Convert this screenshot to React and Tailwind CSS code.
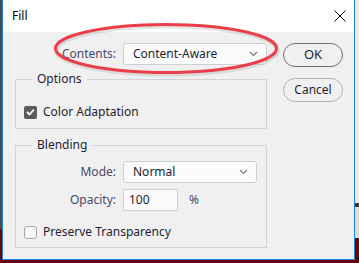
import React from "react";

const font = { fontFamily: '"Noto Sans", "Open Sans", sans-serif' };

function Select({ value, className }) {
  return (
    <div
      className={`h-[22px] flex items-center justify-between pl-[9px] pr-[8px] border border-[#cfcfcf] rounded-[3px] bg-[#fbfbfb] text-[12px] text-[#1f1f33] ${className}`}
    >
      <span>{value}</span>
      <svg width="9" height="6" viewBox="0 0 9 6">
        <path d="M1 1 L4.5 4.5 L8 1" fill="none" stroke="#7a7a7a" strokeWidth="1.1" />
      </svg>
    </div>
  );
}

function Group({ label, className, children }) {
  return (
    <div className={`relative border border-[#d3d3d3] ${className}`}>
      <span className="absolute -top-[9px] left-[16px] px-[5px] bg-[#f0f0f0] text-[12px] leading-[16px] text-[#1f1f33]">
        {label}
      </span>
      {children}
    </div>
  );
}

export default function App() {
  return (
    <div
      className="w-[359px] h-[263px] overflow-hidden flex bg-[#6b0505] relative"
      style={font}
    >
      <div className="w-[2px] h-full bg-[linear-gradient(to_bottom,#4a4a4a_0,#4a4a4a_229px,#6b0505_229px)]" />
      <div className="w-[353px] h-[260px] border-x border-b border-[#1a84d8] bg-[#f0f0f0] flex flex-col">
        <div className="h-[32px] bg-white flex items-center justify-between pl-[9px] pr-[8px]">
          <span className="text-[12px] text-black">Fill</span>
          <svg width="12" height="12" viewBox="0 0 12 12">
            <path d="M0.5 0.5 L11.5 11.5 M11.5 0.5 L0.5 11.5" stroke="#111" strokeWidth="1" />
          </svg>
        </div>
        <div className="flex pt-[11px] pl-[12px]">
          <div className="w-[252px] flex flex-col">
            <div className="flex items-center h-[22px]">
              <span className="w-[101px] text-right text-[12px] text-[#4a4a62]">Contents:</span>
              <Select value="Content-Aware" className="ml-[7px] w-[144px]" />
            </div>
            <Group label="Options" className="mt-[14px] h-[50px]">
              <div className="flex items-center pt-[23px] pl-[8px]">
                <span className="w-[13px] h-[13px] rounded-[2px] bg-[#5b5b5b] flex items-center justify-center">
                  <svg width="9" height="8" viewBox="0 0 9 8">
                    <path d="M1 4 L3.5 6.5 L8 1.5" fill="none" stroke="#fff" strokeWidth="1.8" />
                  </svg>
                </span>
                <span className="ml-[6px] text-[12px] text-[#1f1f33]">Color Adaptation</span>
              </div>
            </Group>
            <Group label="Blending" className="mt-[16px] h-[103px]">
              <div className="flex items-center h-[22px] mt-[15px]">
                <span className="w-[100px] text-right text-[12px] text-[#4a4a62]">Mode:</span>
                <Select value="Normal" className="ml-[7px] w-[134px]" />
              </div>
              <div className="flex items-center h-[22px] mt-[6px]">
                <span className="w-[100px] text-right text-[12px] text-[#4a4a62]">Opacity:</span>
                <div className="ml-[7px] w-[55px] h-[22px] border border-[#cfcfcf] bg-[#fbfbfb] flex items-center pl-[5px] text-[12px] text-[#1f1f33]">
                  100
                </div>
                <span className="ml-[11px] text-[12px] text-[#4a4a62]">%</span>
              </div>
              <div className="flex items-center mt-[12px] pl-[8px]">
                <span className="w-[13px] h-[13px] rounded-[3px] border border-[#a8a8a8] bg-[#f7f7f7]" />
                <span className="ml-[6px] text-[12px] text-[#1f1f33]">Preserve Transparency</span>
              </div>
            </Group>
          </div>
          <div className="ml-[16px] flex flex-col gap-[11px]">
            <button className="w-[60px] h-[24px] rounded-full border border-[#6f6f6f] bg-[#f0f0f0] text-[13px] text-[#1f1f33]">
              OK
            </button>
            <button className="w-[60px] h-[24px] rounded-full border border-[#b3b3b3] bg-[#f0f0f0] text-[12px] text-[#1f1f33]">
              Cancel
            </button>
          </div>
        </div>
      </div>
      <div className="flex-1 h-full bg-[linear-gradient(to_bottom,#eaeaea_0,#eaeaea_203px,#3a3a3a_203px,#3a3a3a_207px,#dcdcdc_207px,#dcdcdc_238px,#6b0505_238px)]" />
      <svg
        className="absolute left-0 top-0 pointer-events-none"
        width="359"
        height="263"
        viewBox="0 0 359 263"
      >
        <ellipse cx="166" cy="48.5" rx="110.5" ry="24" fill="none" stroke="#b0b0b0" strokeOpacity="0.35" strokeWidth="5" transform="translate(1 1.5)" />
        <ellipse cx="166" cy="48.5" rx="110.5" ry="24" fill="none" stroke="#ea3f48" strokeWidth="3" />
      </svg>
    </div>
  );
}
